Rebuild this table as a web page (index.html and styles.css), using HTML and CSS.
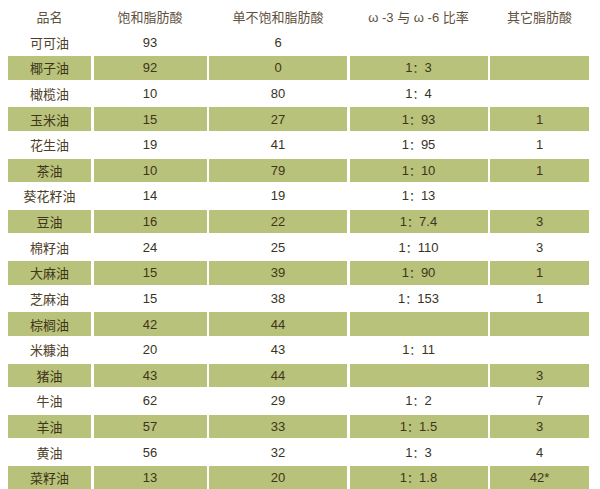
FILE: index.html
```html
<!DOCTYPE html>
<html lang="zh">
<head>
<meta charset="utf-8">
<link rel="stylesheet" href="styles.css">
</head>
<body>
<div class="table">
  <div class="row head"><div class="c">品名</div><div class="c">饱和脂肪酸</div><div class="c">单不饱和脂肪酸</div><div class="c">ω -3 与 ω -6 比率</div><div class="c">其它脂肪酸</div></div>
  <div class="row"><div class="c name">可可油</div><div class="c">93</div><div class="c">6</div><div class="c"></div><div class="c"></div></div>
  <div class="row alt"><div class="c name">椰子油</div><div class="c">92</div><div class="c">0</div><div class="c">1<span class="col">：</span>3</div><div class="c"></div></div>
  <div class="row"><div class="c name">橄榄油</div><div class="c">10</div><div class="c">80</div><div class="c">1<span class="col">：</span>4</div><div class="c"></div></div>
  <div class="row alt"><div class="c name">玉米油</div><div class="c">15</div><div class="c">27</div><div class="c">1<span class="col">：</span>93</div><div class="c">1</div></div>
  <div class="row"><div class="c name">花生油</div><div class="c">19</div><div class="c">41</div><div class="c">1<span class="col">：</span>95</div><div class="c">1</div></div>
  <div class="row alt"><div class="c name">茶油</div><div class="c">10</div><div class="c">79</div><div class="c">1<span class="col">：</span>10</div><div class="c">1</div></div>
  <div class="row"><div class="c name">葵花籽油</div><div class="c">14</div><div class="c">19</div><div class="c">1<span class="col">：</span>13</div><div class="c"></div></div>
  <div class="row alt"><div class="c name">豆油</div><div class="c">16</div><div class="c">22</div><div class="c">1<span class="col">：</span>7.4</div><div class="c">3</div></div>
  <div class="row"><div class="c name">棉籽油</div><div class="c">24</div><div class="c">25</div><div class="c">1<span class="col">：</span>110</div><div class="c">3</div></div>
  <div class="row alt"><div class="c name">大麻油</div><div class="c">15</div><div class="c">39</div><div class="c">1<span class="col">：</span>90</div><div class="c">1</div></div>
  <div class="row"><div class="c name">芝麻油</div><div class="c">15</div><div class="c">38</div><div class="c">1<span class="col">：</span>153</div><div class="c">1</div></div>
  <div class="row alt"><div class="c name">棕榈油</div><div class="c">42</div><div class="c">44</div><div class="c"></div><div class="c"></div></div>
  <div class="row"><div class="c name">米糠油</div><div class="c">20</div><div class="c">43</div><div class="c">1<span class="col">：</span>11</div><div class="c"></div></div>
  <div class="row alt"><div class="c name">猪油</div><div class="c">43</div><div class="c">44</div><div class="c"></div><div class="c">3</div></div>
  <div class="row"><div class="c name">牛油</div><div class="c">62</div><div class="c">29</div><div class="c">1<span class="col">：</span>2</div><div class="c">7</div></div>
  <div class="row alt"><div class="c name">羊油</div><div class="c">57</div><div class="c">33</div><div class="c">1<span class="col">：</span>1.5</div><div class="c">3</div></div>
  <div class="row"><div class="c name">黄油</div><div class="c">56</div><div class="c">32</div><div class="c">1<span class="col">：</span>3</div><div class="c">4</div></div>
  <div class="row alt"><div class="c name">菜籽油</div><div class="c">13</div><div class="c">20</div><div class="c">1<span class="col">：</span>1.8</div><div class="c">42*</div></div>
</div>
</body>
</html>
```
FILE: styles.css
```css
html, body {
  margin: 0;
  padding: 0;
  background: #ffffff;
}
body {
  width: 600px;
  height: 489px;
  overflow: hidden;
}
.table {
  display: flex;
  flex-direction: column;
  gap: 2px;
  padding: 4.8px 0 0 8px;
}
.row {
  display: grid;
  grid-template-columns: 83px 113px 138px 138px 99px;
  column-gap: 2.5px;
  height: 23.625px;
}
.c {
  display: flex;
  align-items: center;
  justify-content: center;
  font-family: "Liberation Sans", Arial, "Noto Sans CJK SC", sans-serif;
  font-size: 13px;
  color: #3a3324;
  white-space: nowrap;
}
.name {
  font-family: "Noto Sans CJK SC", sans-serif;
  color: #4e4128;
  font-size: 13px;
}
.head .c {
  font-family: "Liberation Sans", "Noto Sans CJK SC", sans-serif;
  color: #5f5240;
}
.col {
  font-family: "Noto Sans CJK SC", sans-serif;
  font-size: 12px;
}
.alt .c {
  background: #b8c27b;
}
.alt .c, .alt .name {
  color: #3f3519;
}
```
